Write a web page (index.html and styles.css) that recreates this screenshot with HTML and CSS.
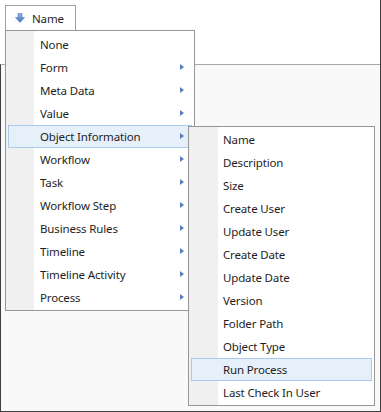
FILE: index.html
```html
<!DOCTYPE html>
<html>
<head>
<meta charset="utf-8">
<link rel="stylesheet" href="styles.css">
</head>
<body>
<div class="frame">
  <div class="header-area">
    <div class="col-header">
      <svg class="sort-icon" width="10" height="10" viewBox="0 0 10 10">
        <defs>
          <linearGradient id="g" x1="0" y1="0" x2="0" y2="1">
            <stop offset="0" stop-color="#8fb4e6"/>
            <stop offset="1" stop-color="#3f72c4"/>
          </linearGradient>
        </defs>
        <polygon points="3,0.5 7,0.5 7,4.5 9.5,4.5 5,9.5 0.5,4.5 3,4.5" fill="url(#g)" stroke="#4a78bf" stroke-width="0.6"/>
      </svg>
      <span>Name</span>
    </div>
  </div>
  <div class="grid-body"></div>

  <div class="menu main-menu">
    <div class="item">None</div>
    <div class="item sub">Form</div>
    <div class="item sub">Meta Data</div>
    <div class="item sub">Value</div>
    <div class="item sub active">Object Information</div>
    <div class="item sub">Workflow</div>
    <div class="item sub">Task</div>
    <div class="item sub">Workflow Step</div>
    <div class="item sub">Business Rules</div>
    <div class="item sub">Timeline</div>
    <div class="item sub">Timeline Activity</div>
    <div class="item sub">Process</div>
  </div>

  <div class="menu sub-menu">
    <div class="item">Name</div>
    <div class="item">Description</div>
    <div class="item">Size</div>
    <div class="item">Create User</div>
    <div class="item">Update User</div>
    <div class="item">Create Date</div>
    <div class="item">Update Date</div>
    <div class="item">Version</div>
    <div class="item">Folder Path</div>
    <div class="item">Object Type</div>
    <div class="item active">Run Process</div>
    <div class="item">Last Check In User</div>
  </div>
</div>
</body>
</html>
```
FILE: styles.css
```css
* { box-sizing: border-box; }
html, body { margin: 0; padding: 0; }
body {
  width: 381px;
  height: 412px;
  background: #ffffff;
  font-family: "Segoe UI", "Noto Sans", "Open Sans", sans-serif;
  font-size: 11.5px;
  letter-spacing: -0.15px;
  color: #1e1e1e;
  overflow: hidden;
}
.frame {
  position: relative;
  width: 381px;
  height: 412px;
  display: flex;
  flex-direction: column;
  border-right: 1px solid #3f3f3f;
  border-bottom: 1px solid #3f3f3f;
}
.header-area {
  height: 64px;
  padding: 5px 0 0 5px;
  background: #ffffff;
}
.col-header {
  width: 71px;
  height: 27px;
  border: 1px solid #a0a0a0;
  border-bottom: none;
  display: flex;
  align-items: center;
  padding-left: 9px;
  gap: 7px;
}
.sort-icon { display: block; margin-top: -2px; }
.col-header span { margin-top: -2px; }
.grid-body {
  flex: 1;
  border-top: 1px solid #a9a9a9;
  border-left: 1px solid #3f3f3f;
  background: #f9f9f9;
}
.menu {
  position: absolute;
  background: #ffffff;
  border: 1px solid #979797;
  padding: 2px 0 1px 0;
  background-image: linear-gradient(to right, #f0f0f0 0, #f0f0f0 28px, #ffffff 28px);
}
.main-menu {
  left: 5px;
  top: 30px;
  width: 190px;
  height: 281px;
}
.sub-menu {
  left: 188px;
  top: 126px;
  width: 187px;
  height: 280px;
  padding-top: 1px;
  background-image: linear-gradient(to right, #f0f0f0 0, #f0f0f0 29px, #ffffff 29px);
}
.item {
  position: relative;
  height: 23px;
  line-height: 21px;
  margin: 0 2px;
  padding-left: 31px;
  border: 1px solid transparent;
  white-space: nowrap;
}
.item.active {
  background: #e6f0fb;
  border-color: #a9c9ee;
}
.item.sub::after {
  content: "";
  position: absolute;
  right: 7px;
  top: 7px;
  border-left: 4px solid #5a7dbd;
  border-top: 3.5px solid transparent;
  border-bottom: 3.5px solid transparent;
}
```
